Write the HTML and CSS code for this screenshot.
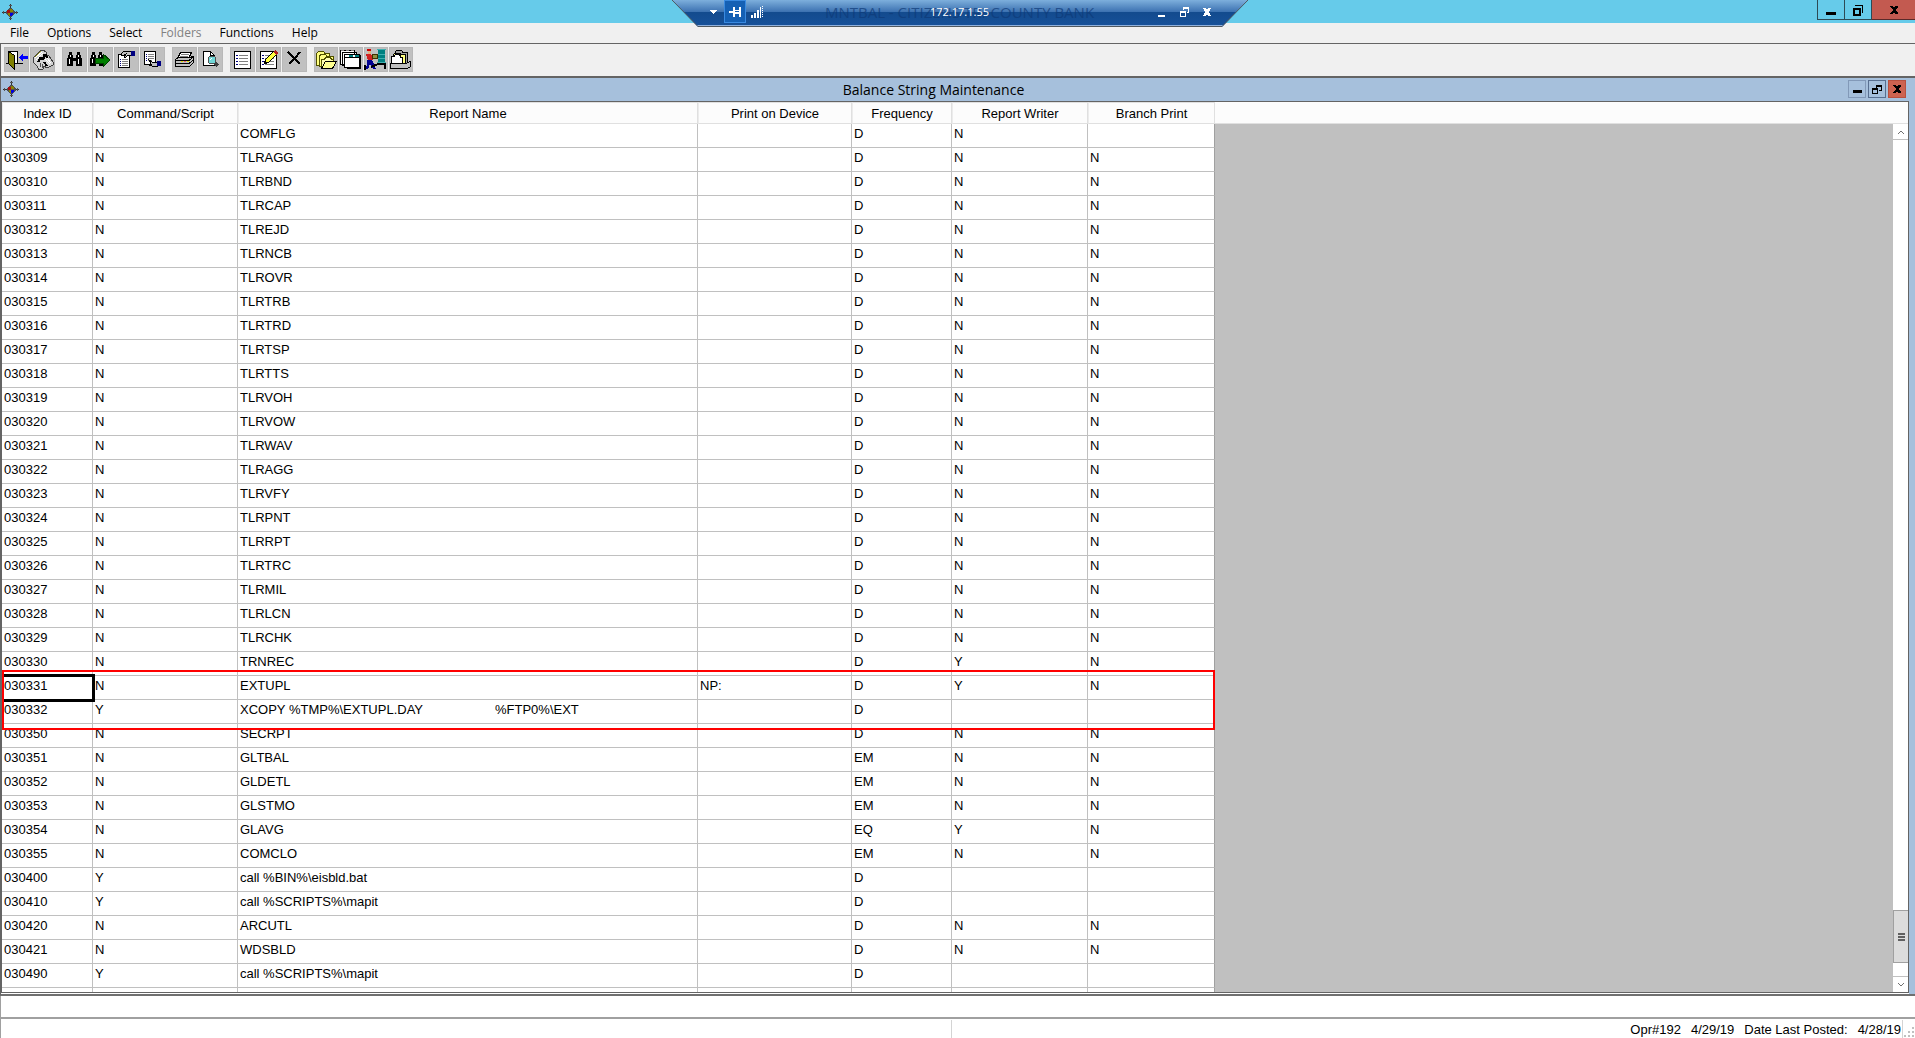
FILE: index.html
```
<!DOCTYPE html>
<html lang="en">
<head>
  <meta charset="UTF-8">
  <meta name="viewport" content="width=device-width, initial-scale=1.0">
  <title>Balance String Maintenance</title>
  <link rel="stylesheet" href="styles.css">
</head>
<body>
  <svg class="defs" aria-hidden="true">
    <symbol id="app" viewBox="0 0 16 16">
      <path d="M8 0h1v16h-1zM0 8h16v1h-16z" fill="#333"/>
      <path d="M7 1h3v1h-3zM7 14h3v1h-3zM1 7h1v3h-1zM14 7h1v3h-1z" fill="#555"/>
      <path d="M7 4h3v1h1v1h1v1h1v3h-1v1h-1v1h-1v1h-3v-1h-1v-1h-1v-1h-1v-3h1v-1h1v-1h1z" fill="#505050"/>
      <path d="M8 5h2v1h1v2h-3zM6 9h2v3h-1v-1h-1z" fill="#8a8400"/>
      <path d="M5 6h3v3h-3z" fill="#a81010"/>
      <path d="M8 9h3v2h-1v1h-2z" fill="#0000e0"/>
    </symbol>
    <symbol id="binoc" viewBox="0 0 25 25">
      <path d="M7 5h3v3h1v3h3v-3h1v-3h3v3h1v3h1v8h-6v-5h-3v5h-6v-8h1v-3h1z" fill="#000"/>
      <path d="M8 8v2M7 12v5M16 8v2M16 12v5" stroke="#fff"/>
    </symbol>
    <symbol id="sheet-icon" viewBox="0 0 25 25">
      <path d="M4.500 4.500h16v17h-16z" fill="#fff" stroke="#000"/>
      <path d="M9 8.500h9M9 11.500h9M9 14.500h9M9 17.500h9" stroke="#808080"/>
      <path d="M6 8.500h2M6 11.500h2M6 14.500h2M6 17.500h2" stroke="#000080"/>
    </symbol>
  </svg>

  <header class="titlebar">
    <svg class="app-icon"><use href="#app"/></svg>
    <div class="win-buttons">
      <button aria-label="Minimize"><svg viewBox="0 0 12 12"><path d="M1 8h10v3h-10z"/></svg></button>
      <button aria-label="Restore"><svg viewBox="0 0 12 12"><path d="M1 4h8v8h-8zM3 6v4h4v-4zM3 1h8v8h-1v-7h-7z" fill-rule="evenodd"/></svg></button>
      <button class="close" aria-label="Close"><svg viewBox="0 0 12 12"><path d="M2 2h3l1 2 1-2h3v1l-3 3 3 3v1h-3l-1-2-1 2h-3v-1l3-3-3-3z"/></svg></button>
    </div>
  </header>

  <div class="remote">
    <svg class="remote-bg" viewBox="0 0 576 27">
      <defs>
        <linearGradient id="glass" x1="0" y1="0" x2="0" y2="1">
          <stop offset="0" stop-color="#7dafdc"/>
          <stop offset="0.45" stop-color="#3b70b0"/>
          <stop offset="0.46" stop-color="#134b8e"/>
          <stop offset="1" stop-color="#17519a"/>
        </linearGradient>
      </defs>
      <path d="M0 0h576l-26 27h-524z" fill="url(#glass)"/>
      <path d="M24 25.500h528" stroke="#8fb0dc"/>
      <path d="M0 0l26 26.500h524l26-26.500" fill="none" stroke="#50585f"/>
    </svg>
    <span class="remote-caption">MNTBAL - CITIZENS TRI-COUNTY BANK</span>
    <span class="remote-host">172.17.1.55</span>
    <div class="remote-tools">
      <button aria-label="Menu"><svg viewBox="0 0 12 12"><path d="M2 4h8l-4 4z"/></svg></button>
      <button class="pin" aria-label="Pin"><svg viewBox="0 0 12 12"><path d="M0 5h4v-4h2v3h4v-3h2v10h-2v-3h-4v3h-2v-4h-4zM6 5v1h4v-1z" fill-rule="evenodd"/></svg></button>
      <button aria-label="Connection"><svg viewBox="0 0 12 12"><path d="M0 9h2v3h-2zM3 7h2v5h-2zM6 4h2v8h-2zM9 1h1v11h-1zM11 0h1v1h-1zM11 2h1v1h-1zM11 4h1v1h-1zM11 6h1v1h-1zM11 8h1v1h-1zM11 10h1v1h-1z"/></svg></button>
    </div>
    <div class="remote-win">
      <button aria-label="Minimize session"><svg viewBox="0 0 12 12"><path d="M3 9h7v2h-7z"/></svg></button>
      <button aria-label="Restore session"><svg viewBox="0 0 12 12"><path d="M2 5h6v6h-6zM3 7v3h4v-3zM5 1h6v6h-2v-1h1v-3h-4v1h-1z" fill-rule="evenodd"/></svg></button>
      <button aria-label="Close session"><svg viewBox="0 0 12 12"><path d="M2 2h3l1 2 1-2h3l-2 4 2 4h-3l-1-2-1 2h-3l2-4z"/></svg></button>
    </div>
  </div>

  <nav class="menubar">
    <button>File</button>
    <button>Options</button>
    <button>Select</button>
    <button disabled>Folders</button>
    <button>Functions</button>
    <button>Help</button>
  </nav>

  <div class="toolbar">
    <div class="group">
      <button aria-label="Exit"><svg viewBox="0 0 25 25">
        <path d="M4.500 4.500h9v12h-9z" fill="#fff" stroke="#000"/>
        <path d="M2 16.500h17" stroke="#000"/>
        <path d="M4.500 4.500l6 4v14l-6-6z" fill="#808000" stroke="#000"/>
        <path d="M15 10l4-4v3h5v3h-5v3z" fill="#0000ff"/>
      </svg></button>
      <button aria-label="Accept"><svg viewBox="0 0 25 25">
        <path d="M3 11l7-7 3-1 3 2v3l3 1 4 6v3l-6 3-3-2-1 3-4 1-2-4-3-3z" fill="#d4d4d4" stroke="#404040"/>
        <path d="M5 11l7-6M6 13l7-7" stroke="#fff"/>
        <path d="M5 10l6-6" stroke="#909020"/>
        <path d="M9 11h5v-3h2l1 3M8 15l2-3h4M14 15l3 4" fill="none" stroke="#000" stroke-width="2"/>
        <path d="M15 12l5 5M17 11l4 5" stroke="#fff"/>
        <path d="M10 16v4M12 17v4" stroke="#505050"/>
      </svg></button>
    </div>
    <div class="group">
      <button aria-label="Find"><svg><use href="#binoc"/></svg></button>
      <button aria-label="Find next"><svg viewBox="0 0 25 25">
        <path d="M4 5h3v3h1v3h2v-3h1v-3h3v3h1v3h1v8h-5v-5h-3v5h-6v-8h1v-3h1z" fill="#000"/>
        <path d="M5 8v2M4 12v4M12 8v2" stroke="#fff"/>
        <path d="M7 11h8v-4l7 6-7 7v-4h-8z" fill="#008000" stroke="#004000"/>
      </svg></button>
      <button aria-label="Get record"><svg viewBox="0 0 25 25">
        <path d="M4.500 7.500h11v13h-11z" fill="#fff" stroke="#000"/>
        <path d="M8 12.500h6M8 14.500h6M8 16.500h6M8 18.500h6" stroke="#808080"/>
        <path d="M6 12.500h1M6 14.500h1M6 16.500h1M6 18.500h1" stroke="#000080"/>
        <path d="M7 7l3-3h7v4l-4 1-2 2-1-1 2-3-4 2z" fill="#c0c0c0" stroke="#000"/>
        <path d="M17 4h4v5h-4z" fill="#000080"/>
      </svg></button>
      <button aria-label="Put record"><svg viewBox="0 0 25 25">
        <path d="M4.500 4.500h11v13h-11z" fill="#fff" stroke="#000"/>
        <path d="M8 7.500h6M8 9.500h6M8 11.500h6M8 13.500h4" stroke="#808080"/>
        <path d="M6 7.500h1M6 9.500h1M6 11.500h1M6 13.500h1" stroke="#000080"/>
        <path d="M9 13l3 2h5v4h-5l-5-2h4z" fill="#c0c0c0" stroke="#000"/>
        <path d="M17 14h4v5h-4z" fill="#000080"/>
      </svg></button>
    </div>
    <div class="group">
      <button aria-label="Print"><svg viewBox="0 0 25 25">
        <path d="M8.500 5.500h11l-3 6h-11z" fill="#fff" stroke="#000"/>
        <path d="M9 7.500h8M8 9.500h8" stroke="#808080"/>
        <path d="M3.500 12.500l3-2h11l4-1v6l-4 4h-14z" fill="#c0c0c0" stroke="#000"/>
        <path d="M4 13.500h13l4-3M4 16.500h13l4-3" fill="none" stroke="#000"/>
        <path d="M9 14.500h2M15 14.500h2" stroke="#e0e000"/>
        <path d="M12 14.500h2" stroke="#ff6060"/>
      </svg></button>
      <button aria-label="Preview"><svg viewBox="0 0 25 25">
        <path d="M5.500 4.500h7l4 4v10h-11z" fill="#fff" stroke="#000"/>
        <path d="M12.500 4.500v4h4" fill="none" stroke="#000"/>
        <circle cx="14" cy="13" r="4" fill="#70d8d8" stroke="#505050"/>
        <path d="M12 13l2-2" stroke="#fff"/>
        <path d="M17 16l3 3" stroke="#404040" stroke-width="3"/>
      </svg></button>
    </div>
    <div class="group">
      <button aria-label="List"><svg><use href="#sheet-icon"/></svg></button>
      <button aria-label="Edit"><svg viewBox="0 0 25 25">
        <use href="#sheet-icon"/>
        <path d="M8.500 16.500l1-4 8-8 3 3-8 8z" fill="#ffff40" stroke="#000"/>
        <path d="M17 5l2-2 3 3-2 2z" fill="#b02020"/>
        <path d="M8 15h2v2h-2z" fill="#000"/>
      </svg></button>
      <button aria-label="Delete"><svg viewBox="0 0 25 25">
        <path d="M6 5l4 4 3 3 5 5M18 5l-5 6-6 6" fill="none" stroke="#000" stroke-width="2"/>
      </svg></button>
    </div>
    <div class="group folders">
      <button aria-label="Open folders"><svg viewBox="0 0 25 25">
        <path d="M2.500 18v-11l2-3h5l1 2h5v12z" fill="#ffff80" stroke="#505000"/>
        <path d="M5.500 20v-11l2-2h4l1 2h7v9z" fill="#ffff80" stroke="#505000"/>
        <path d="M7.500 21.500v-9h3l1-2h5l1 2h2" fill="#ffffb0" stroke="#505000"/>
        <path d="M7.500 21.500l4-7h11l-4 7z" fill="#ffff90" stroke="#000"/>
      </svg></button>
      <button aria-label="Card file"><svg viewBox="0 0 25 25">
        <path d="M1.500 3.500h14v14h-14zM3.500 5.500h14v13h-14z" fill="#fff" stroke="#000"/>
        <path d="M5.500 7.500h15v13h-15z" fill="#fff" stroke="#000"/>
        <path d="M2 3h3v1h-3zM7 3h3v1h-3zM12 3h3v1h-3z" fill="#808080"/>
        <path d="M10 8h4v2h-4zM16 8h4v2h-4z" fill="#008080"/>
        <path d="M6 10.500h15M21.500 8v13h-14" fill="none" stroke="#000"/>
      </svg></button>
      <button aria-label="File away"><svg viewBox="0 0 25 25">
        <path d="M3 2h4v2h-4z" fill="#d00000"/>
        <path d="M4 4h3v3h-3z" fill="#e0b080"/>
        <path d="M2 7h5l3 4-3 3h-3z" fill="#d02020"/>
        <path d="M8 7h5v4h-5z" fill="#909040" stroke="#403000"/>
        <path d="M3 13h5l2 4 2 5h-3l-3-5-2 5h-3l2-4z" fill="#000090"/>
        <path d="M14 2h7v13h-7z" fill="#008080"/>
        <path d="M13 2.500h9M13 15.500h9M14 7.500h7M14 11.500h7" stroke="#40b0b0"/>
        <path d="M7 20l7-3h7v5M1 18v5" fill="none" stroke="#000" stroke-width="2"/>
      </svg></button>
      <button aria-label="Folder tray"><svg viewBox="0 0 25 25">
        <path d="M6.500 16v-11l1-2h5l1 2h5v12z" fill="#a0a0a0" stroke="#000"/>
        <path d="M4.500 17v-9l1-2h5l1 1h5v9z" fill="#ffff80" stroke="#000"/>
        <path d="M2.500 18v-9h3l1-2h4l1 3h2v8z" fill="#fff" stroke="#000"/>
        <path d="M1.500 16.500h15l5-2v5l-3 2h-17z" fill="#c0c0c0" stroke="#000"/>
      </svg></button>
    </div>
  </div>

  <main class="child">
    <div class="child-title">
      <svg class="app-icon"><use href="#app"/></svg>
      <h1>Balance String Maintenance</h1>
      <div class="child-buttons">
        <button aria-label="Minimize window"><svg viewBox="0 0 12 12"><path d="M2 7h9v3h-9z"/></svg></button>
        <button class="restore" aria-label="Restore window"><svg viewBox="0 0 12 12"><path d="M1 5h6v6h-6zM2 7v3h4v-3zM5 2h6v6h-3v-1h2v-3h-4v1h-1z" fill-rule="evenodd"/></svg></button>
        <button class="close" aria-label="Close window"><svg viewBox="0 0 12 12"><path d="M2 2h3l1 2 1-2h3v1l-3 3 3 3v1h-3l-1-2-1 2h-3v-1l3-3-3-3z"/></svg></button>
      </div>
    </div>
    <div class="sheet">
      <div class="records">
        <table>
          <colgroup>
            <col class="c-id"><col class="c-cmd"><col class="c-name"><col class="c-dev"><col class="c-freq"><col class="c-writer"><col class="c-branch">
          </colgroup>
          <thead>
            <tr><th>Index ID</th><th>Command/Script</th><th>Report Name</th><th>Print on Device</th><th>Frequency</th><th>Report Writer</th><th>Branch Print</th></tr>
          </thead>
          <tbody>
            <tr><td>030300</td><td>N</td><td>COMFLG</td><td></td><td>D</td><td>N</td><td></td></tr>
            <tr><td>030309</td><td>N</td><td>TLRAGG</td><td></td><td>D</td><td>N</td><td>N</td></tr>
            <tr><td>030310</td><td>N</td><td>TLRBND</td><td></td><td>D</td><td>N</td><td>N</td></tr>
            <tr><td>030311</td><td>N</td><td>TLRCAP</td><td></td><td>D</td><td>N</td><td>N</td></tr>
            <tr><td>030312</td><td>N</td><td>TLREJD</td><td></td><td>D</td><td>N</td><td>N</td></tr>
            <tr><td>030313</td><td>N</td><td>TLRNCB</td><td></td><td>D</td><td>N</td><td>N</td></tr>
            <tr><td>030314</td><td>N</td><td>TLROVR</td><td></td><td>D</td><td>N</td><td>N</td></tr>
            <tr><td>030315</td><td>N</td><td>TLRTRB</td><td></td><td>D</td><td>N</td><td>N</td></tr>
            <tr><td>030316</td><td>N</td><td>TLRTRD</td><td></td><td>D</td><td>N</td><td>N</td></tr>
            <tr><td>030317</td><td>N</td><td>TLRTSP</td><td></td><td>D</td><td>N</td><td>N</td></tr>
            <tr><td>030318</td><td>N</td><td>TLRTTS</td><td></td><td>D</td><td>N</td><td>N</td></tr>
            <tr><td>030319</td><td>N</td><td>TLRVOH</td><td></td><td>D</td><td>N</td><td>N</td></tr>
            <tr><td>030320</td><td>N</td><td>TLRVOW</td><td></td><td>D</td><td>N</td><td>N</td></tr>
            <tr><td>030321</td><td>N</td><td>TLRWAV</td><td></td><td>D</td><td>N</td><td>N</td></tr>
            <tr><td>030322</td><td>N</td><td>TLRAGG</td><td></td><td>D</td><td>N</td><td>N</td></tr>
            <tr><td>030323</td><td>N</td><td>TLRVFY</td><td></td><td>D</td><td>N</td><td>N</td></tr>
            <tr><td>030324</td><td>N</td><td>TLRPNT</td><td></td><td>D</td><td>N</td><td>N</td></tr>
            <tr><td>030325</td><td>N</td><td>TLRRPT</td><td></td><td>D</td><td>N</td><td>N</td></tr>
            <tr><td>030326</td><td>N</td><td>TLRTRC</td><td></td><td>D</td><td>N</td><td>N</td></tr>
            <tr><td>030327</td><td>N</td><td>TLRMIL</td><td></td><td>D</td><td>N</td><td>N</td></tr>
            <tr><td>030328</td><td>N</td><td>TLRLCN</td><td></td><td>D</td><td>N</td><td>N</td></tr>
            <tr><td>030329</td><td>N</td><td>TLRCHK</td><td></td><td>D</td><td>N</td><td>N</td></tr>
            <tr><td>030330</td><td>N</td><td>TRNREC</td><td></td><td>D</td><td>Y</td><td>N</td></tr>
          </tbody>
          <tbody class="marked">
            <tr><td class="focus">030331</td><td>N</td><td>EXTUPL</td><td>NP:</td><td>D</td><td>Y</td><td>N</td></tr>
            <tr><td>030332</td><td>Y</td><td>XCOPY %TMP%\EXTUPL.DAY                    %FTP0%\EXT</td><td></td><td>D</td><td></td><td></td></tr>
          </tbody>
          <tbody>
            <tr><td>030350</td><td>N</td><td>SECRPT</td><td></td><td>D</td><td>N</td><td>N</td></tr>
            <tr><td>030351</td><td>N</td><td>GLTBAL</td><td></td><td>EM</td><td>N</td><td>N</td></tr>
            <tr><td>030352</td><td>N</td><td>GLDETL</td><td></td><td>EM</td><td>N</td><td>N</td></tr>
            <tr><td>030353</td><td>N</td><td>GLSTMO</td><td></td><td>EM</td><td>N</td><td>N</td></tr>
            <tr><td>030354</td><td>N</td><td>GLAVG</td><td></td><td>EQ</td><td>Y</td><td>N</td></tr>
            <tr><td>030355</td><td>N</td><td>COMCLO</td><td></td><td>EM</td><td>N</td><td>N</td></tr>
            <tr><td>030400</td><td>Y</td><td>call %BIN%\eisbld.bat</td><td></td><td>D</td><td></td><td></td></tr>
            <tr><td>030410</td><td>Y</td><td>call %SCRIPTS%\mapit</td><td></td><td>D</td><td></td><td></td></tr>
            <tr><td>030420</td><td>N</td><td>ARCUTL</td><td></td><td>D</td><td>N</td><td>N</td></tr>
            <tr><td>030421</td><td>N</td><td>WDSBLD</td><td></td><td>D</td><td>N</td><td>N</td></tr>
            <tr><td>030490</td><td>Y</td><td>call %SCRIPTS%\mapit</td><td></td><td>D</td><td></td><td></td></tr>
            <tr><td></td><td></td><td></td><td></td><td></td><td></td><td></td></tr>
          </tbody>
        </table>
      </div>
      <div class="scrollbar">
        <button class="up" aria-label="Scroll up"><svg viewBox="0 0 8 8"><path d="M1 6l3-3 3 3"/></svg></button>
        <div class="track"><div class="thumb"></div></div>
        <button class="down" aria-label="Scroll down"><svg viewBox="0 0 8 8"><path d="M1 2l3 3 3-3"/></svg></button>
      </div>
    </div>
  </main>

  <div class="message"></div>
  <footer class="status">
    <div class="pane"></div>
    <div class="pane info"><span>Opr#192</span><span>4/29/19</span><span>Date Last Posted:</span><span>4/28/19</span></div>
    <svg class="grip" viewBox="0 0 12 12"><path d="M9 1h2v2h-2zM5 5h2v2h-2zM9 5h2v2h-2zM1 9h2v2h-2zM5 9h2v2h-2zM9 9h2v2h-2z"/></svg>
  </footer>
</body>
</html>
```
FILE: styles.css
```
* { box-sizing: border-box; }
body { margin: 0; height: 100vh; display: flex; flex-direction: column; overflow: hidden; background: #fff; color: #000; font: 13px "Liberation Sans", Arial, sans-serif; }
button { margin: 0; padding: 0; border: 0; background: none; color: inherit; font: inherit; display: flex; align-items: center; justify-content: center; }
svg { display: block; shape-rendering: crispEdges; }
.defs { position: absolute; width: 0; height: 0; }
.app-icon { width: 16px; height: 16px; margin-left: 2px; }

/* main window title */
.titlebar { flex: none; height: 23px; display: flex; align-items: center; justify-content: space-between; background: #66cbea; }
.win-buttons { align-self: flex-start; display: flex; height: 20px; border-left: 1px solid #2d4a55; }
.win-buttons button { width: 27px; border-right: 1px solid #2d4a55; border-bottom: 1px solid #2d4a55; }
.win-buttons .close { width: 43px; background: #c35a50; border-color: #5a2a2a; border-right: 0; }
.win-buttons svg, .remote button svg, .child-buttons svg { width: 12px; height: 12px; }

/* remote session bar, hangs over the title and menu */
.remote { position: absolute; top: 0; left: 50%; width: 576px; height: 27px; margin-left: -286px; color: #fff; font-family: "Open Sans", sans-serif; }
.remote-bg { width: 576px; height: 27px; shape-rendering: auto; }
.remote svg { fill: #fff; }
.remote-caption, .remote-host { position: absolute; left: 0; right: 0; top: 0; line-height: 24px; text-align: center; white-space: nowrap; }
.remote-caption { color: #0e3a78; font-size: 15px; opacity: 0.7; }
.remote-host { font-size: 11px; }
.remote-tools, .remote-win { position: absolute; top: 0; height: 24px; display: flex; }
.remote-tools { left: 30px; }
.remote-win { right: 29px; }
.remote-tools button { width: 22px; }
.remote-win button { width: 23px; }
.remote .pin { height: 23px; background: #1560b4; border: 1px solid #3a8ae0; }

.menubar { flex: none; height: 21px; display: flex; padding: 0 1px 1px; background: #f0f0f0; border-bottom: 1px solid #646464; font: 12px "Open Sans", sans-serif; }
.menubar button { padding: 0 9px; }
.menubar button:disabled { color: #808080; }

.toolbar { flex: none; height: 32px; display: flex; gap: 7px; padding: 3px; background: #f0f0f0; border-left: 1px solid #646464; }
.group { display: flex; gap: 1px; }
.group button { width: 25px; height: 25px; background: #c0c0c0; border: 1px solid #b8b8b8; }
.group svg { flex: none; width: 25px; height: 25px; }
.group.folders button { width: 24px; }

/* child window */
.child { flex: 1; min-height: 0; display: flex; flex-direction: column; background: #a6c0dc; border-top: 2px solid #646464; border-left: 1px solid #646464; border-bottom: 2px solid #707070; }
.child-title { flex: none; height: 23px; display: flex; align-items: center; padding: 0 9px 1px 0; }
.child-title h1 { flex: 1; margin: 0; text-align: center; font: 14px "Open Sans", sans-serif; }
.child-buttons { display: flex; gap: 2px; }
.child-buttons button { width: 18px; height: 18px; border: 1px solid #8299b8; }
.child-buttons .restore { border-color: #586f90; }
.child-buttons .close { background: #cd6350; border-color: #b8503e; }

.sheet { flex: 1; min-height: 0; display: flex; margin: 0 6px 1px 0; border: 1px solid #646464; background: linear-gradient(#fcfcfc 21px, #e0e0e0 21px, #e0e0e0 22px, #c0c0c0 22px); box-shadow: 0 1px #fff; }
.records { flex: 1; min-width: 0; overflow: hidden; }
table { width: 1213px; table-layout: fixed; border-collapse: separate; border-spacing: 0; }
.c-id { width: 91px; }
.c-cmd { width: 145px; }
.c-name { width: 460px; }
.c-dev { width: 154px; }
.c-freq { width: 100px; }
.c-writer { width: 136px; }
.c-branch { width: 127px; }
th { height: 22px; padding: 2px 0 0; background: #fcfcfc; border: 1px solid #e0e0e0; border-left-color: #ececec; font-weight: normal; line-height: 18px; }
td { height: 24px; padding: 0 2px 3px; background: #fff; border-right: 1px solid #c0c0c0; border-bottom: 1px solid #c0c0c0; line-height: 20px; white-space: pre; }
td:last-child { border-right-color: #a0a0a0; }
.focus { outline: 3px solid #000; outline-offset: -1px; }
.marked { position: relative; }
.marked::after { content: ""; position: absolute; top: -6px; right: 0; bottom: -6px; left: 0; border: 2px solid #f00; }

.scrollbar { flex: none; width: 15px; margin-top: 22px; display: flex; flex-direction: column; background: #fff; }
.scrollbar button { height: 16px; }
.scrollbar svg { width: 8px; height: 8px; fill: none; stroke: #707070; stroke-width: 1; shape-rendering: auto; }
.scrollbar .up { border-bottom: 1px solid #c0c0c0; }
.scrollbar .down { border-top: 1px solid #c0c0c0; }
.track { flex: 1; display: flex; flex-direction: column; justify-content: flex-end; padding-bottom: 13px; }
.thumb { height: 53px; border: 1px solid #a0a0a0; border-right: 0; background: repeating-linear-gradient(#606060 0 2px, #dcdcdc 2px 3px) center / 7px 8px no-repeat #dcdcdc; }

.message { flex: none; height: 23px; border-left: 1px solid #a0a0a0; border-bottom: 2px solid #a0a0a0; }
.status { flex: none; height: 19px; display: flex; border-left: 1px solid #a0a0a0; }
.pane { flex: 1; margin-top: 1px; border-right: 1px solid #d4d4d4; }
.info { display: flex; justify-content: flex-end; gap: 10px; padding-right: 1px; line-height: 20px; white-space: nowrap; }
.grip { align-self: flex-end; width: 12px; height: 12px; fill: #c0c0c0; }
```
